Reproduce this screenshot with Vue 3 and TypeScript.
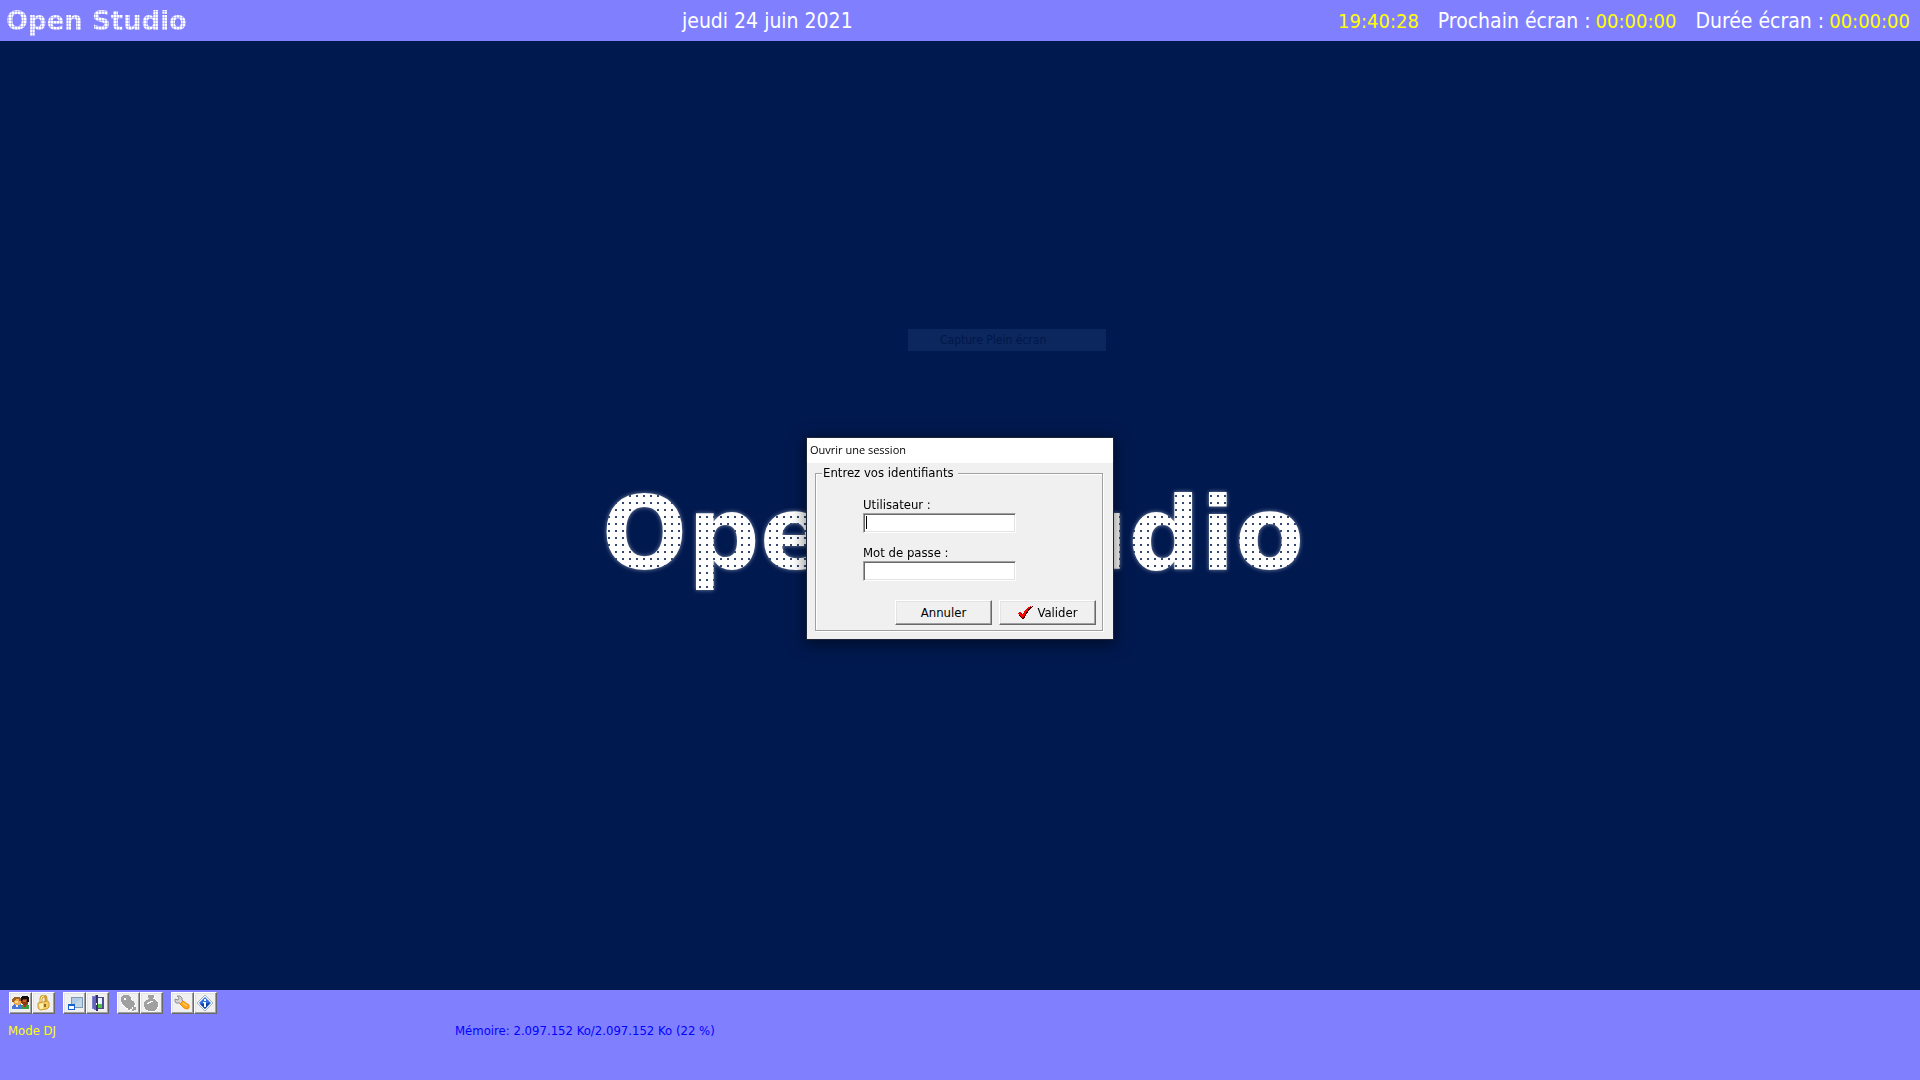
<script setup lang="ts">
import { ref } from 'vue'

const user = ref('')
const password = ref('')
const today = 'jeudi 24 juin 2021'
const clock = '19:40:28'

interface Timer {
  label: string
  value: string
}

const timers: Timer[] = [
  { label: 'Prochain écran :', value: '00:00:00' },
  { label: 'Durée écran :', value: '00:00:00' },
]
</script>

<template>
  <div class="app">
    <header class="topbar">
      <span class="brand dots-small">Open Studio</span>
      <span class="date">{{ today }}</span>
      <div class="clocks">
        <span class="value">{{ clock }}</span>
        <div v-for="timer in timers" :key="timer.label" class="timer">
          <span>{{ timer.label }}</span>
          <span class="value">{{ timer.value }}</span>
        </div>
      </div>
    </header>

    <main class="stage">
      <h1 class="wordmark"><span class="dots-large">Open Studio</span></h1>
      <div class="ghost-menu">Capture Plein écran</div>
    </main>

    <footer class="bottombar">
      <div class="toolbar">
        <div class="group">
          <button type="button" class="tool" aria-label="Utilisateurs">
            <svg viewBox="0 0 17 16" width="17" height="16" shape-rendering="crispEdges">
              <path d="M9 14V11L11 9H15L17 11V14Z" fill="#3a9a48" />
              <path d="M10 3H15L16 5V8L14 10H11L9 8V5Z" fill="#8a3a12" />
              <path d="M9 6V3L10 1H15L17 3V7H15V4H12Z" fill="#101010" />
              <path d="M11 5H14V7H11Z" fill="#d0642c" />
              <path d="M12 10H14V12H12Z" fill="#d02020" />
              <path d="M0 14V11L2 9H8L10 11V14Z" fill="#4878d8" />
              <path d="M4 10H6V12H4Z" fill="#e8f0ff" />
              <path d="M1 4L3 2H7L9 4V8L7 10H3L1 8Z" fill="#f4a848" />
              <path d="M0 7V4L2 2H7L9 4V6H7V4H5L2 6V7Z" fill="#9a6428" />
              <path d="M3 6H6V8H3Z" fill="#ffdc98" />
            </svg>
          </button>
          <button type="button" class="tool" aria-label="Verrouiller">
            <svg viewBox="0 0 16 16" width="16" height="16">
              <path d="M5 8V4Q5 1 8 1Q10 1 10 4V7" fill="none" stroke="#d0a038" stroke-width="3" />
              <path d="M5 8V4Q5 1 8 1" fill="none" stroke="#ffeeb0" stroke-width="1" />
              <path d="M2 8L12 6L13 8V12L11 14L4 15L2 13Z" fill="#f4cc60" stroke="#d0a038" />
              <path d="M3 9L7 8V14H4Z" fill="#fff0b0" />
              <path d="M8 9H10V12H8Z" fill="#906820" />
            </svg>
          </button>
        </div>
        <div class="group">
          <button type="button" class="tool" aria-label="Fenêtre">
            <svg viewBox="0 0 16 16" width="16" height="16">
              <rect x="4" y="2" width="12" height="11" fill="#8098b8" />
              <rect x="5" y="3" width="10" height="9" fill="#b0cce4" />
              <path d="M5 12L15 3V12Z" fill="#c4d8e4" />
              <rect x="1" y="9" width="7" height="6" fill="#1860d0" />
              <rect x="2" y="11" width="5" height="3" fill="#fff" />
            </svg>
          </button>
          <button type="button" class="tool" aria-label="Quitter">
            <svg viewBox="0 0 16 16" width="16" height="16" shape-rendering="crispEdges">
              <path d="M3 2H14V14H3Z" fill="#4c4c90" />
              <path d="M8 3H12V13H8Z" fill="#e8f4ff" />
              <path d="M8 9H12V13H8Z" fill="#50c040" />
              <path d="M2 1L8 0V16L2 14Z" fill="#8080d0" />
              <path d="M3 2L6 1V15L3 13Z" fill="#6464b8" />
              <path d="M6 0H8V16H6Z" fill="#303068" />
              <path d="M6 8H7V10H6Z" fill="#fff" />
            </svg>
          </button>
        </div>
        <div class="group">
          <button type="button" class="tool" disabled aria-label="Traitement">
            <svg viewBox="0 0 17 17" width="17" height="17" shape-rendering="crispEdges">
              <path d="M3 1H9L12 4V6H14V8H16V11H14V13H16V15H14V17H12V15H10V16H8V14H6L3 11L1 7V3Z" fill="#fff" />
              <path d="M3 0H8L11 3L12 6H14V8H15V10H14V12H16V15H14V16H12V14H10V15H8V13H6L3 10L1 6V2Z" fill="#a0a0a0" />
              <path d="M4 3H6V5H4ZM12 12H13V14H12Z" fill="#fff" />
            </svg>
          </button>
          <button type="button" class="tool" disabled aria-label="Minuteur">
            <svg viewBox="0 0 17 17" width="17" height="17" shape-rendering="crispEdges">
              <path d="M6 1H12V4L15 6L16 9V12L13 16L10 17H7L4 16L2 12V9L4 6L6 4Z" fill="#fff" />
              <path d="M5 0H11V3H10V4L13 5L15 8V11L13 15L10 16H6L3 15L1 11V8L3 5L6 4V3H5Z" fill="#a0a0a0" />
              <path d="M4 8H5V7H7V6H8V8H6V9H4ZM8 6H10V7H8Z" fill="#fff" />
            </svg>
          </button>
        </div>
        <div class="group">
          <button type="button" class="tool" aria-label="Outils">
            <svg viewBox="0 0 17 16" width="17" height="16">
              <path d="M1 4L4 5L5 3L3 1L6 1L8 3V5L10 7L7 9L5 8H2L1 6Z" fill="#d4d4d4" stroke="#909090" />
              <path d="M6 9L9 6L15 10V13L13 14L10 13Z" fill="#ffa81c" stroke="#e89010" />
              <path d="M9 8L13 11" stroke="#ffe080" />
            </svg>
          </button>
          <button type="button" class="tool" aria-label="Informations">
            <svg viewBox="0 0 17 17" width="17" height="17">
              <path d="M8 0L16 8L8 16L0 8Z" fill="#f8fcff" stroke="#a4b4c8" />
              <path d="M8 2L14 8L8 14L2 8Z" fill="#3070e0" />
              <path d="M3 9L13 8L8 14Z" fill="#1040a0" />
              <path d="M7 4H9V6H7ZM6 7H9V12H7V8H6Z" fill="#fff" />
            </svg>
          </button>
        </div>
      </div>
      <div class="status">
        <span class="mode">Mode DJ</span>
        <span class="memory">Mémoire: 2.097.152 Ko/2.097.152 Ko (22 %)</span>
      </div>
    </footer>

    <form class="dialog" role="dialog" aria-labelledby="dialog-title" @submit.prevent>
      <h2 id="dialog-title" class="title">Ouvrir une session</h2>
      <div class="body">
        <fieldset class="frame">
          <legend>Entrez vos identifiants</legend>
          <div class="fields">
            <div class="field">
              <label for="user">Utilisateur :</label>
              <input id="user" v-model="user" class="current" type="text" autocomplete="off" />
            </div>
            <div class="field">
              <label for="password">Mot de passe :</label>
              <input id="password" v-model="password" type="password" autocomplete="off" />
            </div>
          </div>
          <div class="actions">
            <button type="button" class="push">Annuler</button>
            <button type="submit" class="push">
              <svg viewBox="0 0 16 14" width="16" height="14" shape-rendering="crispEdges">
                <path d="M1 8L4 7L6 9L11 2L16 0V1L12 4L7 13H5L2 9Z" fill="#400" />
                <path d="M0 7L4 6L5 9L10 2L14 0L11 4L6 12H5L2 8Z" fill="#f00" />
              </svg>
              <span>Valider</span>
            </button>
          </div>
        </fieldset>
      </div>
    </form>
  </div>
</template>

<style>
body {
  margin: 0;
  background: #00194f;
}
</style>

<style scoped>
.app {
  display: flex;
  flex-direction: column;
  min-height: 100vh;
  color: #000;
  font: 13px/16px "DejaVu Sans Condensed", "DejaVu Sans", sans-serif;
}

.topbar {
  display: flex;
  align-items: center;
  box-sizing: border-box;
  height: 41px;
  padding: 0 10px 0 6px;
  background: #8080ff;
  color: #fff;
  font-size: 21px;
  line-height: 24px;
  white-space: nowrap;
}

.brand {
  flex: none;
  font: bold 26px/36px "DejaVu Sans", sans-serif;
}

.date {
  margin-left: 26%;
}

.dots-small,
.dots-large {
  color: transparent;
  background-clip: text;
  -webkit-background-clip: text;
}

.dots-small {
  background-color: #fff;
  background-image:
    linear-gradient(90deg, transparent 2px, rgba(128, 128, 255, 0.4) 2px),
    linear-gradient(transparent 2px, rgba(128, 128, 255, 0.4) 2px);
  background-size: 3px 3px;
}

.clocks {
  display: flex;
  align-items: baseline;
  gap: 19px;
  margin-left: auto;
}

.timer {
  display: flex;
  align-items: baseline;
  gap: 5px;
}

.value {
  color: #ff0;
  font-size: 20px;
}

.stage {
  position: relative;
  flex: 1;
  display: flex;
  align-items: center;
  justify-content: center;
  background: #00194f;
}

.wordmark {
  margin: 36px 14px 0 0;
  font: bold 101px/120px "DejaVu Sans", sans-serif;
  white-space: nowrap;
  filter: drop-shadow(0 0 2px rgba(255, 255, 255, 0.5));
}

.dots-large {
  background-color: #33476f;
  background-image: radial-gradient(circle, #fff 4px, transparent 4px);
  background-size: 7px 7px;
}

.ghost-menu {
  position: absolute;
  top: 288px;
  left: calc(50% - 52px);
  box-sizing: border-box;
  width: 198px;
  padding: 3px 32px;
  background: #0c275d;
  color: #00174a;
  font-size: 12px;
}

.bottombar {
  display: flex;
  flex-direction: column;
  gap: 9px;
  box-sizing: border-box;
  min-height: 90px;
  padding: 2px 8px;
  background: #8080ff;
}

.toolbar {
  display: flex;
  gap: 8px;
  padding-left: 1px;
}

.group {
  display: flex;
}

.tool,
.push {
  display: flex;
  align-items: center;
  justify-content: center;
  box-sizing: border-box;
  margin: 0;
  padding: 0;
  border: 1px solid;
  border-color: #fff #696969 #696969 #fff;
  background: #f0f0f0;
  box-shadow: inset -1px -1px 0 #a0a0a0, inset 1px 1px 0 #e3e3e3;
  color: #000;
  font: inherit;
}

.tool {
  width: 23px;
  height: 22px;
}

.tool svg,
.push svg {
  flex: none;
}

.status {
  display: flex;
}

.mode {
  flex: 0 0 447px;
  color: #ff0;
}

.memory {
  color: #00f;
}

.dialog {
  position: fixed;
  top: calc(50% - 102px);
  left: calc(50% - 153px);
  width: 306px;
  background: #f0f0f0;
  box-shadow: 0 0 0 1px #1c2438, 0 3px 14px 2px rgba(0, 0, 0, 0.5);
}

.title {
  margin: 0;
  padding: 0 3px 2px;
  background: #fff;
  font: 11px/23px "Open Sans", sans-serif;
}

.body {
  padding: 2px 10px 8px 8px;
}

.frame {
  min-width: 0;
  margin: 0;
  padding: 16px 6px 5px;
  border: 1px solid #a0a0a0;
  box-shadow: inset 1px 1px 0 #fff, 1px 1px 0 #fff;
}

.frame legend {
  padding: 0 4px 0 1px;
  background: #f0f0f0;
}

.fields {
  display: flex;
  flex-direction: column;
  gap: 12px;
  padding-left: 41px;
}

.field {
  display: flex;
  flex-direction: column;
}

.field input {
  box-sizing: border-box;
  width: 153px;
  height: 20px;
  padding: 0 2px;
  border: 1px solid;
  border-color: #a0a0a0 #fff #fff #a0a0a0;
  border-radius: 0;
  outline: none;
  background: #fff;
  box-shadow: inset 1px 1px 0 #696969, inset -1px -1px 0 #e3e3e3;
  font: inherit;
}

.field .current {
  background: linear-gradient(#000, #000) 2px 2px / 1px 13px no-repeat #fff;
}

.actions {
  display: flex;
  justify-content: flex-end;
  gap: 7px;
  margin-top: 19px;
}

.push {
  gap: 4px;
  width: 97px;
  height: 25px;
}
</style>
